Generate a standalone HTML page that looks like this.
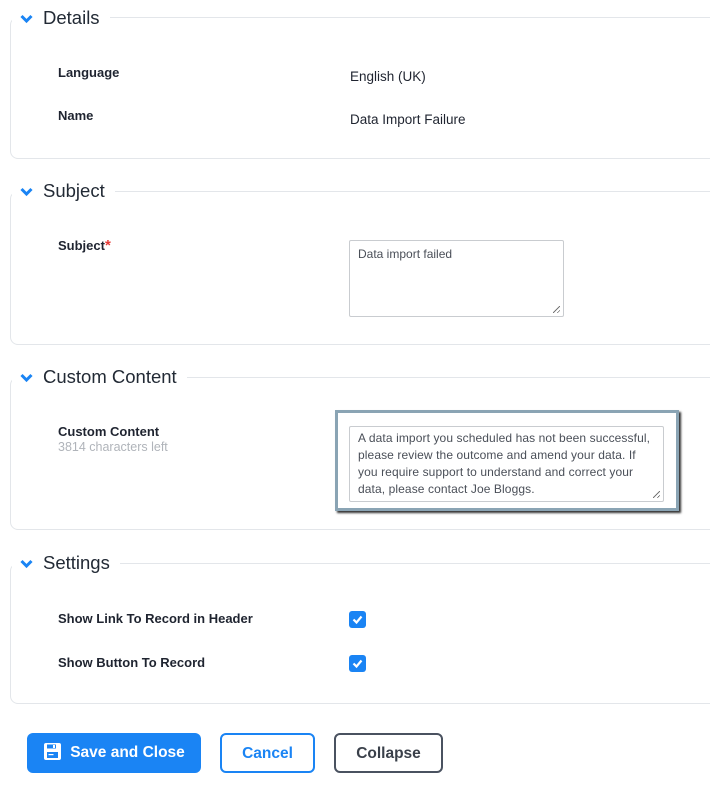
<!DOCTYPE html>
<html><head><style>
body{margin:0;width:710px;height:789px;background:#fff;font-family:"Liberation Sans",sans-serif;color:#1f2430;position:relative;overflow:hidden}
.box{position:absolute;left:10px;width:720px;border:1px solid #e3e6ea;border-radius:8px;box-sizing:border-box}
.leg{position:absolute;left:12px;background:#fff;padding-left:8px;padding-right:10px;font-size:18.5px;color:#222a35;height:22px;line-height:22px}
.leg svg{vertical-align:0px;margin-right:10px}
.lab{position:absolute;left:58px;font-size:13px;font-weight:bold;color:#1f2430}
.val{position:absolute;left:350px;font-size:13.5px;color:#1f2430}
.ta{position:absolute;border:1px solid #c9ccd0;border-radius:2px;font-size:12px;color:#4a4f58;padding:5px 8px;box-sizing:border-box;line-height:17px;background:#fff}
.grip{position:absolute;right:3px;bottom:3px;width:7px;height:7px;background:linear-gradient(135deg,transparent 45%,#777 45%,#777 55%,transparent 55%,transparent 75%,#777 75%,#777 85%,transparent 85%)}
.cb{position:absolute;left:349px;width:17px;height:17px;background:#1a84f4;border-radius:3px}
.btn{position:absolute;top:733px;height:40px;box-sizing:border-box;border-radius:6px;font-weight:bold;font-size:15.5px;text-align:center;line-height:38px}
</style></head><body>
<div class="box" style="top:17px;height:142px"></div>
<div class="box" style="top:191px;height:154px"></div>
<div class="box" style="top:377px;height:153px"></div>
<div class="box" style="top:563px;height:141px"></div>

<div class="leg" style="top:7px"><svg width="13" height="10" viewBox="0 0 13 10"><path d="M1.5 2l5 5 5-5" stroke="#1a84f4" stroke-width="3" fill="none"/></svg>Details</div>
<div class="leg" style="top:180px"><svg width="13" height="10" viewBox="0 0 13 10"><path d="M1.5 2l5 5 5-5" stroke="#1a84f4" stroke-width="3" fill="none"/></svg>Subject</div>
<div class="leg" style="top:366px"><svg width="13" height="10" viewBox="0 0 13 10"><path d="M1.5 2l5 5 5-5" stroke="#1a84f4" stroke-width="3" fill="none"/></svg>Custom Content</div>
<div class="leg" style="top:552px"><svg width="13" height="10" viewBox="0 0 13 10"><path d="M1.5 2l5 5 5-5" stroke="#1a84f4" stroke-width="3" fill="none"/></svg>Settings</div>

<div class="lab" style="top:65px">Language</div>
<div class="val" style="top:69px">English (UK)</div>
<div class="lab" style="top:108px">Name</div>
<div class="val" style="top:112px">Data Import Failure</div>

<div class="lab" style="top:237px">Subject<span style="color:#e53935;font-size:15px">*</span></div>
<div class="ta" style="left:349px;top:240px;width:215px;height:77px">Data import failed<div class="grip"></div></div>

<div class="lab" style="top:424px">Custom Content</div>
<div style="position:absolute;left:58px;top:440px;font-size:12.5px;color:#b0b4ba">3814 characters left</div>
<div style="position:absolute;left:335px;top:410px;width:344px;height:101px;box-sizing:border-box;border:3px solid #8aa4b4;box-shadow:2px 2px 2px #333;background:#fff"></div>
<div class="ta" style="left:349px;top:426px;width:315px;height:76px;padding:3px 12px 0 8px;letter-spacing:0.1px">A data import you scheduled has not been successful, please review the outcome and amend your data. If you require support to understand and correct your data, please contact Joe Bloggs.<div class="grip"></div></div>

<div class="lab" style="top:611px">Show Link To Record in Header</div>
<div class="cb" style="top:611px"><svg width="17" height="17" viewBox="0 0 17 17"><path d="M4.5 8.5l3 3 5-6" stroke="#fff" stroke-width="2.2" fill="none"/></svg></div>
<div class="lab" style="top:655px">Show Button To Record</div>
<div class="cb" style="top:655px"><svg width="17" height="17" viewBox="0 0 17 17"><path d="M4.5 8.5l3 3 5-6" stroke="#fff" stroke-width="2.2" fill="none"/></svg></div>

<div class="btn" style="left:27px;width:174px;background:#1a84f4;color:#fff;line-height:40px"><svg width="19" height="19" viewBox="0 0 19 19" style="vertical-align:-4px;margin-right:8px"><rect x="1" y="1" width="17" height="17" rx="2" fill="#fff"/><rect x="4" y="2.5" width="9" height="4" fill="#1a84f4"/><rect x="10" y="3" width="2" height="3" fill="#fff"/><rect x="4" y="10" width="11" height="6" fill="#1a84f4"/><rect x="5.5" y="12" width="5" height="1.2" fill="#fff"/></svg>Save and Close</div>
<div class="btn" style="left:220px;width:95px;border:2px solid #1a84f4;color:#1a84f4">Cancel</div>
<div class="btn" style="left:334px;width:109px;border:2px solid #4a5260;color:#3a404a">Collapse</div>
</body></html>
